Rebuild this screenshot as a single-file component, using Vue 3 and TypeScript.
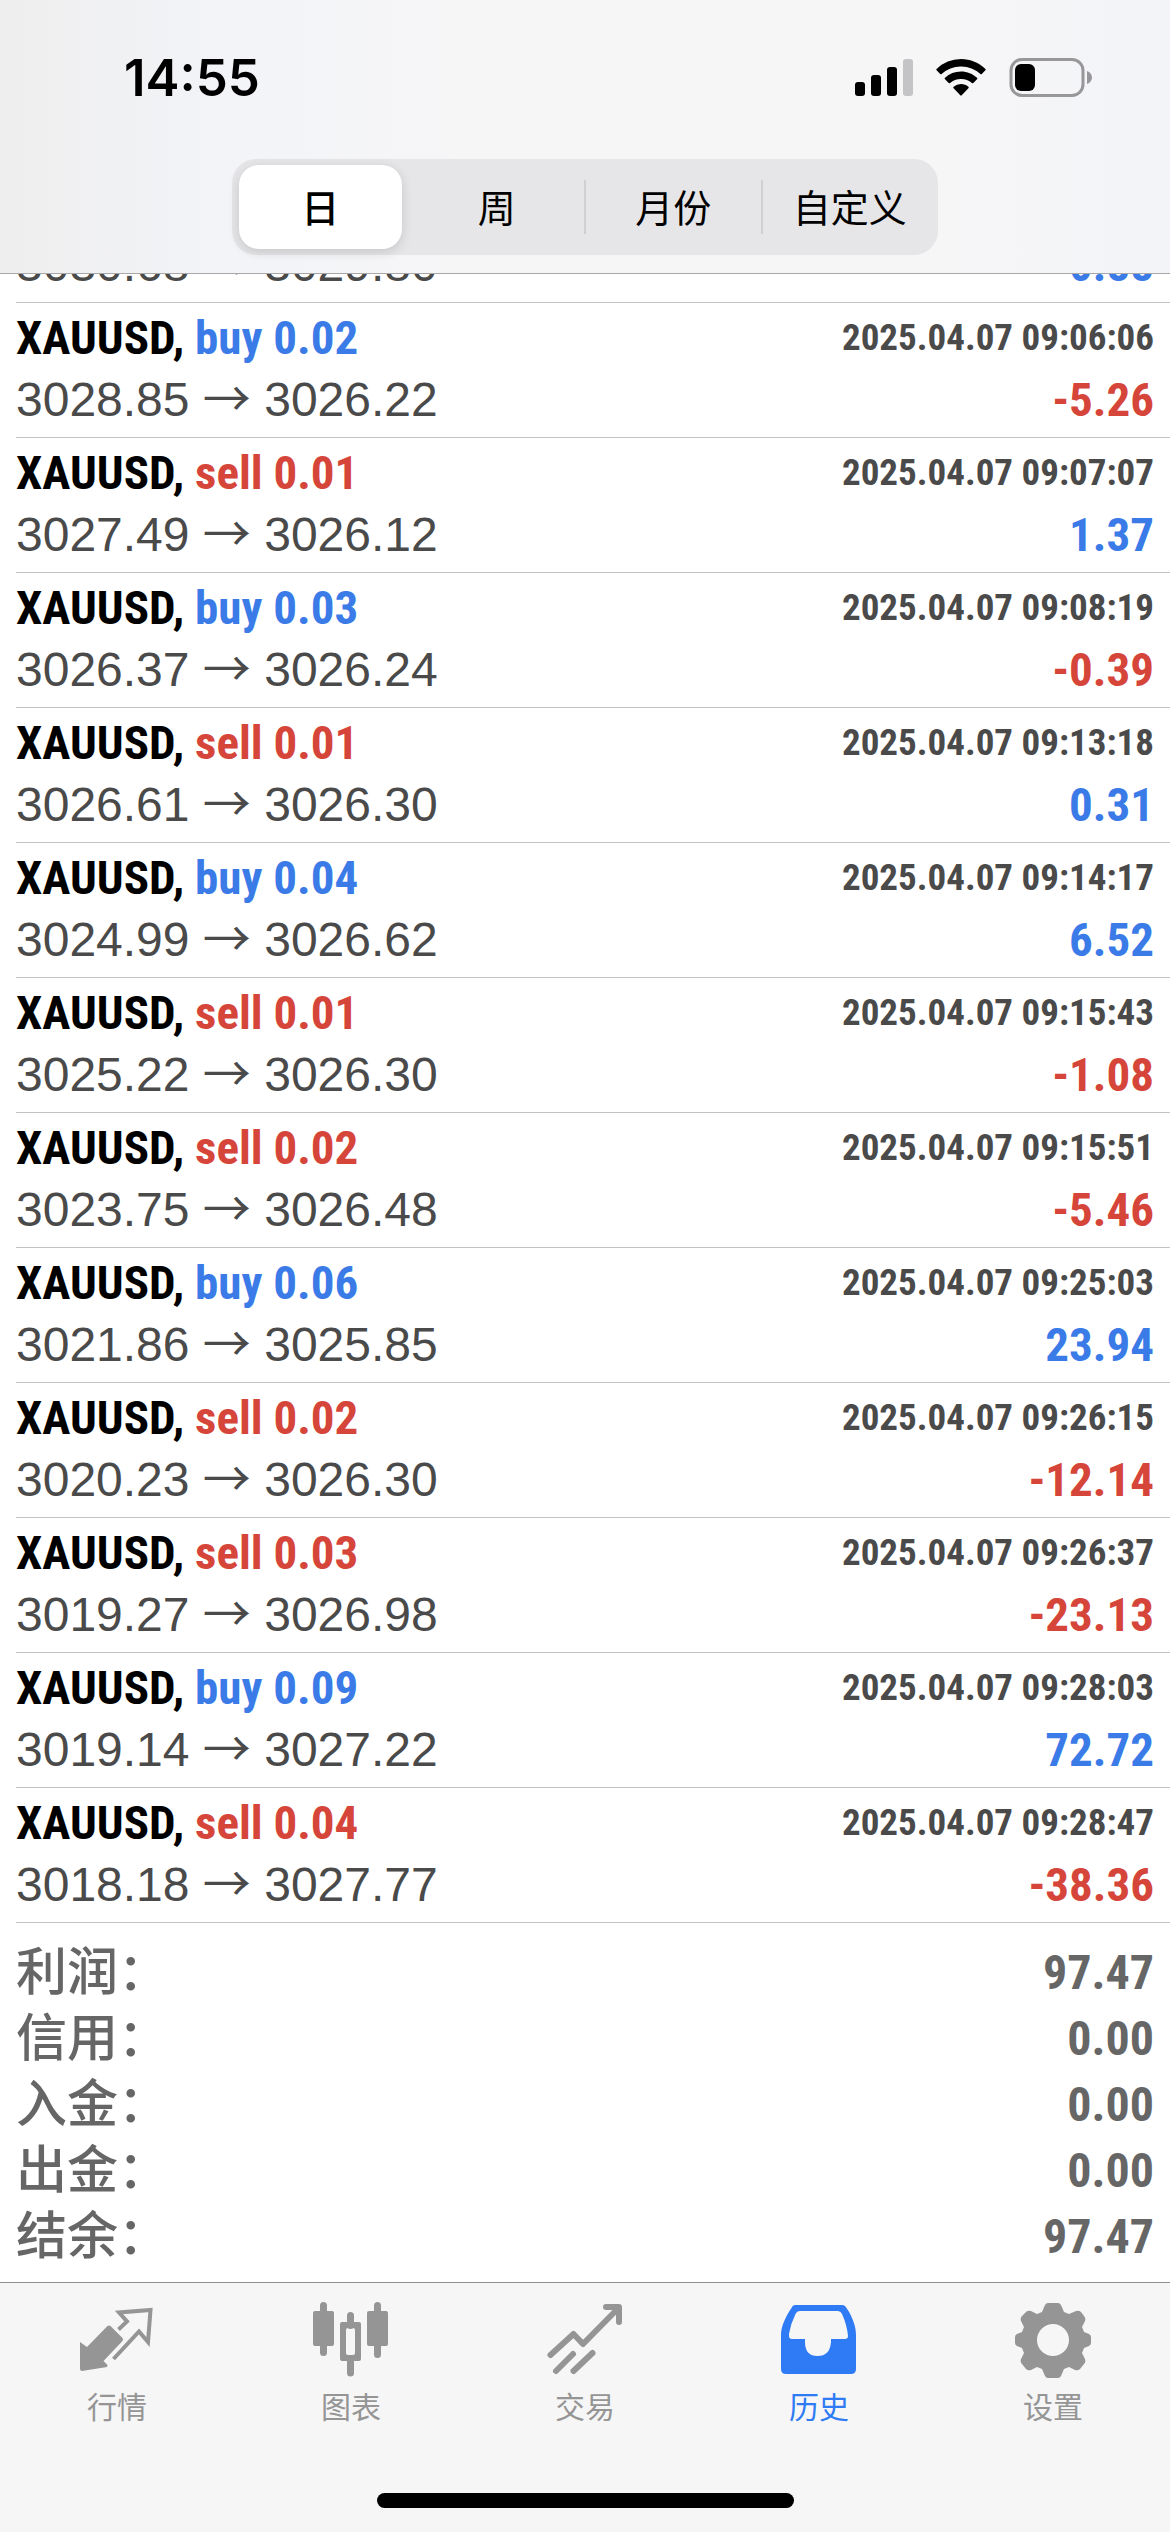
<script setup lang="ts">
import { ref } from 'vue'

type Side = 'buy' | 'sell'

interface Deal {
  side: Side
  volume: string
  open: string
  close: string
  time: string
  profit: string
}

interface Total {
  label: string
  value: string
}

const periods: string[] = ['日', '周', '月份', '自定义']
const activePeriod = ref<string>('日')

const symbol = 'XAUUSD'

// The deal that is scrolled under the header: only its price line is rendered.
const partial = { open: '3030.68', close: '3029.80', profit: '0.88' }

const deals: Deal[] = [
  { side: 'buy', volume: '0.02', open: '3028.85', close: '3026.22', time: '2025.04.07 09:06:06', profit: '-5.26' },
  { side: 'sell', volume: '0.01', open: '3027.49', close: '3026.12', time: '2025.04.07 09:07:07', profit: '1.37' },
  { side: 'buy', volume: '0.03', open: '3026.37', close: '3026.24', time: '2025.04.07 09:08:19', profit: '-0.39' },
  { side: 'sell', volume: '0.01', open: '3026.61', close: '3026.30', time: '2025.04.07 09:13:18', profit: '0.31' },
  { side: 'buy', volume: '0.04', open: '3024.99', close: '3026.62', time: '2025.04.07 09:14:17', profit: '6.52' },
  { side: 'sell', volume: '0.01', open: '3025.22', close: '3026.30', time: '2025.04.07 09:15:43', profit: '-1.08' },
  { side: 'sell', volume: '0.02', open: '3023.75', close: '3026.48', time: '2025.04.07 09:15:51', profit: '-5.46' },
  { side: 'buy', volume: '0.06', open: '3021.86', close: '3025.85', time: '2025.04.07 09:25:03', profit: '23.94' },
  { side: 'sell', volume: '0.02', open: '3020.23', close: '3026.30', time: '2025.04.07 09:26:15', profit: '-12.14' },
  { side: 'sell', volume: '0.03', open: '3019.27', close: '3026.98', time: '2025.04.07 09:26:37', profit: '-23.13' },
  { side: 'buy', volume: '0.09', open: '3019.14', close: '3027.22', time: '2025.04.07 09:28:03', profit: '72.72' },
  { side: 'sell', volume: '0.04', open: '3018.18', close: '3027.77', time: '2025.04.07 09:28:47', profit: '-38.36' },
]

const totals: Total[] = [
  { label: '利润：', value: '97.47' },
  { label: '信用：', value: '0.00' },
  { label: '入金：', value: '0.00' },
  { label: '出金：', value: '0.00' },
  { label: '结余：', value: '97.47' },
]

const profitClass = (value: string): string => (value.startsWith('-') ? 'loss' : 'gain')
</script>

<template>
  <div class="screen">
    <header class="top">
      <div class="status">
        <time class="clock">14:55</time>
        <div class="indicators">
          <svg width="58" height="38" viewBox="0 0 58 38" aria-label="信号">
            <rect x="0" y="23" width="10" height="14" rx="3" />
            <rect x="16" y="16" width="10" height="21" rx="3" />
            <rect x="32" y="8" width="10" height="29" rx="3" />
            <rect x="48" y="0" width="10" height="37" rx="3" fill="#c4c4c6" />
          </svg>
          <svg width="50" height="38" viewBox="0 0 50 38" aria-label="Wi-Fi">
            <path d="M25 0C34.500 0 43 3.800 49.400 9.900a1 1 0 0 1 0 1.400L45.800 15a1 1 0 0 1-1.400 0A28 28 0 0 0 25 7.400 28 28 0 0 0 5.600 15a1 1 0 0 1-1.400 0L.600 11.300a1 1 0 0 1 0-1.400A35.300 35.300 0 0 1 25 0z" />
            <path d="M25 12.500c6.200 0 11.800 2.400 16 6.300a1 1 0 0 1 0 1.500l-3.700 3.700a1 1 0 0 1-1.400 0A16 16 0 0 0 25 19.900 16 16 0 0 0 14.100 24a1 1 0 0 1-1.400 0L9 20.300a1 1 0 0 1 0-1.500 23.400 23.400 0 0 1 16-6.300z" />
            <path d="M25 25c2.800 0 5.400 1 7.400 2.700a1 1 0 0 1 0 1.500l-6.700 7.100a1 1 0 0 1-1.400 0l-6.700-7.100a1 1 0 0 1 0-1.500A11.500 11.500 0 0 1 25 25z" />
          </svg>
          <svg width="83" height="40" viewBox="0 0 83 40" aria-label="电池">
            <rect x="2" y="1.500" width="72" height="36" rx="11" fill="none" stroke="#97979a" stroke-width="3" />
            <rect x="6" y="6" width="20" height="27" rx="6" />
            <path d="M78 13c3 1.200 5 3.600 5 6.500s-2 5.300-5 6.500z" fill="#97979a" />
          </svg>
        </div>
      </div>
      <div class="segments" role="group" aria-label="时间段">
        <button
          v-for="period in periods"
          :key="period"
          type="button"
          class="segment"
          :class="{ active: period === activePeriod }"
          :aria-pressed="period === activePeriod"
          @click="activePeriod = period"
        >
          {{ period }}
        </button>
      </div>
    </header>

    <main class="history">
      <ul class="deals">
        <li class="deal">
          <div class="line">
            <span class="prices">{{ partial.open }} <span class="arrow">→</span> {{ partial.close }}</span>
            <span class="profit" :class="profitClass(partial.profit)">{{ partial.profit }}</span>
          </div>
        </li>
        <li v-for="deal in deals" :key="deal.time" class="deal">
          <div class="line">
            <span class="name">{{ symbol }}, <span :class="deal.side">{{ deal.side }} {{ deal.volume }}</span></span>
            <time class="date">{{ deal.time }}</time>
          </div>
          <div class="line">
            <span class="prices">{{ deal.open }} <span class="arrow">→</span> {{ deal.close }}</span>
            <span class="profit" :class="profitClass(deal.profit)">{{ deal.profit }}</span>
          </div>
        </li>
      </ul>
      <dl class="totals">
        <div v-for="total in totals" :key="total.label" class="total">
          <dt>{{ total.label }}</dt>
          <dd>{{ total.value }}</dd>
        </div>
      </dl>
    </main>

    <footer class="bottom">
      <nav class="tabs">
        <a class="tab" href="#quotes">
          <svg width="76" height="76" viewBox="0 0 76 76" aria-hidden="true">
            <path d="M1 40 8 45 28 24.500q2-2 4 0L43 35.500q2 2 0 4L24.500 59l4 4-.5 2L3 69q-2 0-2-2z" />
            <path d="M39.500 27.500 48 19.500 40 10.500 71.500 8 69 40 60 29.500 34.500 57" fill="none" stroke="currentColor" stroke-width="4" />
          </svg>
          行情
        </a>
        <a class="tab" href="#chart">
          <svg width="76" height="76" viewBox="0 0 76 76" aria-hidden="true">
            <g stroke="currentColor" stroke-width="7" stroke-linecap="round">
              <path d="M10.500 3.500v47M37.500 13.500v10M37.500 60v11M64.500 3.500v49" />
            </g>
            <rect x="0" y="9" width="21" height="35" rx="2" />
            <rect x="54" y="9" width="21" height="35" rx="2" />
            <path fill-rule="evenodd" d="M29 20h17q2 0 2 2v35q0 2-2 2H29q-2 0-2-2V22q0-2 2-2zm6 6q-2 0-2 2v23q0 2 2 2h5q2 0 2-2V28q0-2-2-2z" />
          </svg>
          图表
        </a>
        <a class="tab" href="#trade">
          <svg width="76" height="76" viewBox="0 0 76 76" aria-hidden="true">
            <g fill="none" stroke="currentColor" stroke-width="6" stroke-linecap="round" stroke-linejoin="round">
              <path d="M3.500 53 26.500 32l9.500 10L71.500 6M59 5h13v15" />
              <path d="m9 69 17-17M26.500 69l19-18" />
            </g>
          </svg>
          交易
        </a>
        <a class="tab current" href="#history" aria-current="page">
          <svg width="76" height="76" viewBox="0 0 76 76" aria-hidden="true">
            <path fill-rule="evenodd" d="M15 3h46q3 0 4.500 3C71 14 75 24 75 33v34q0 5-5 5H5q-5 0-5-5V33C0 24 5 14 10.500 6 12 3 13 3 15 3zm4 6q-3 0-4.500 3-5 10-6.500 20v2q0 3 3 3h13v3q0 14 12.500 14t13.500-14v-3h14q3 0 3-3-1-11-6-22-1.500-3-4.500-3z" />
          </svg>
          历史
        </a>
        <a class="tab" href="#settings">
          <svg width="76" height="76" viewBox="0 0 76 76" aria-hidden="true">
            <path fill-rule="evenodd" d="M33 1h10q2 0 3 2l3 7 5 2 7-3q3-1 5 1l3 4q2 2 1 5l-3 6 2 5 5 2q2 1 2 3v6q0 2-2 3l-5 2-2 5 3 6q1 3-1 5l-4 5q-2 2-5 1l-6-3-5 2-3 7q-1 2-3 2H33q-2 0-3-2l-3-7-5-2-6 3q-3 1-5-1l-4-5q-2-2-1-5l3-6-2-5-5-2q-2-1-2-3v-6q0-2 2-3l5-2 2-5-3-6q-1-3 1-5l4-4q2-2 5-1l6 3 5-2 3-7q1-2 3-2zm5 21a16 16 0 1 0 0 32 16 16 0 0 0 0-32z" />
          </svg>
          设置
        </a>
      </nav>
      <div class="home-bar"></div>
    </footer>
  </div>
</template>

<style>
body {
  margin: 0;
  background: #fff;
}
</style>

<style scoped>
.screen {
  display: flex;
  flex-direction: column;
  min-height: 100vh;
  font-family: "Liberation Sans", "Noto Sans CJK SC", sans-serif;
  color: #000;
}

.top {
  box-sizing: border-box;
  padding: 48px 0 18px;
  border-bottom: 1px solid #a8a8aa;
  background: linear-gradient(90deg, #eeeeee 0%, #f3f4f8 20%, #f6f6f7 40%, #f6f6f7 80%, #f3f4f8 100%);
}

.status {
  display: flex;
  justify-content: space-between;
  align-items: center;
  height: 60px;
  padding: 0 78px 0 124px;
}

.clock {
  font-family: Inter, "Liberation Sans", sans-serif;
  font-weight: 600;
  font-size: 51px;
  line-height: 60px;
}

.indicators {
  display: flex;
  align-items: center;
  gap: 23px;
}

.segments {
  display: grid;
  grid-template-columns: repeat(4, 1fr);
  box-sizing: border-box;
  width: calc(60% + 4px);
  margin: 51px auto 0;
  padding: 6px 0;
  border-radius: 24px;
  background: #e6e6e8;
}

.segment {
  position: relative;
  height: 84px;
  margin: 0 7px;
  padding: 0 0 2px;
  border: 0;
  border-radius: 20px;
  background: transparent;
  font: 400 38px/82px "Noto Sans CJK SC", sans-serif;
  color: #000;
  white-space: nowrap;
}

.segment.active {
  background: #fff;
  font-weight: 500;
  box-shadow: 0 3px 12px rgba(0, 0, 0, 0.14);
}

.segment:nth-child(n + 3)::before {
  content: "";
  position: absolute;
  top: 15px;
  left: -8px;
  width: 2px;
  height: 54px;
  background: #d0d0d2;
}

.history {
  flex: 1;
  overflow: hidden;
  background: #fff;
}

.deals {
  margin: -44px 0 0;
  padding: 0 0 0 16px;
  list-style: none;
}

.deal {
  padding: 4px 16px 6px 0;
  border-bottom: 1px solid #c3c3c5;
}

.line {
  display: flex;
  justify-content: space-between;
  height: 62px;
  line-height: 62px;
  white-space: nowrap;
}

.name,
.date,
.profit,
.total dd {
  font-family: "Roboto Condensed", "Liberation Sans Narrow", sans-serif;
  font-weight: 700;
}

.name {
  font-size: 47px;
}

.date {
  font-size: 37px;
  color: #4a4a4a;
}

.prices {
  font-size: 48px;
  color: #4a4a4a;
}

.arrow {
  font-family: "Noto Sans CJK SC", sans-serif;
  line-height: 48px;
}

.profit {
  font-size: 47px;
}

.buy,
.gain {
  color: #3a7be8;
}

.sell,
.loss {
  color: #d6453a;
}

.totals {
  margin: 0;
  padding: 17px 16px 11px;
  color: #666;
}

.total {
  display: flex;
  justify-content: space-between;
  height: 66px;
  line-height: 66px;
}

.total dt {
  font-weight: 500;
  font-size: 51px;
}

.total dd {
  margin: 0;
  font-size: 48px;
}

.bottom {
  border-top: 1px solid #909092;
  background: #f6f6f6;
}

.tabs {
  display: grid;
  grid-template-columns: repeat(5, 1fr);
  padding-top: 19px;
}

.tab {
  display: flex;
  flex-direction: column;
  align-items: center;
  gap: 5px;
  font: 400 30px/44px "Noto Sans CJK SC", sans-serif;
  color: #959595;
  text-decoration: none;
}

.tab svg {
  fill: currentColor;
}

.tab.current {
  color: #2f7af5;
}

.home-bar {
  width: 417px;
  height: 15px;
  margin: 66px auto 24px;
  border-radius: 8px;
  background: #000;
}
</style>
